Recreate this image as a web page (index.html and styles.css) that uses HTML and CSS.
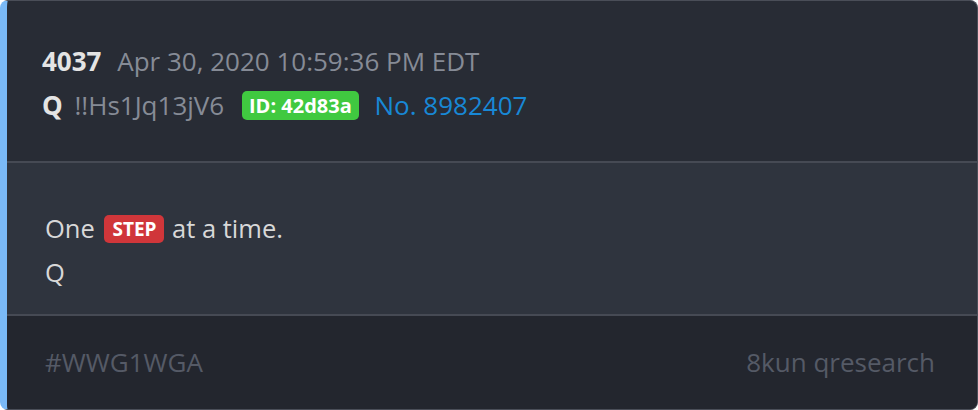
FILE: index.html
```html
<!DOCTYPE html>
<html>
<head>
    <meta charset="UTF-8">
    <title>Post 4037</title>
    <link rel="stylesheet" href="styles.css">
</head>
<body>
    <div class="post">
        <div class="post-header">
            <div class="line">
                <span class="num">4037</span>
                <span class="date">Apr 30, 2020 10:59:36 PM EDT</span>
            </div>
            <div class="line">
                <span class="name">Q</span>
                <span class="trip">!!Hs1Jq13jV6</span>
                <span class="badge id">ID: 42d83a</span>
                <span class="postno">No. 8982407</span>
            </div>
        </div>
        <div class="post-body">
            <div class="line">One <span class="badge step">STEP</span> at a time.</div>
            <div class="line">Q</div>
        </div>
        <div class="post-footer">
            <span>#WWG1WGA</span>
            <span>8kun qresearch</span>
        </div>
    </div>
</body>
</html>
```

FILE: styles.css
```css
body {
    margin: 0;
    background-color: #ffffff;
    font-family: "Open Sans", "Liberation Sans", sans-serif;
}

.post {
    width: 978px;
    height: 410px;
    box-sizing: border-box;
    border: 1px solid #4a4e58;
    border-left: 7px solid #7ab9f6;
    border-radius: 8px;
    overflow: hidden;
    background-color: #282c35;
}

.line {
    line-height: 44px;
    white-space: nowrap;
}

.post-header {
    height: 122px;
    padding: 38px 35px 0;
    border-bottom: 2px solid #464a54;
    font-size: 26px;
}

.num {
    font-weight: bold;
    color: #e4e4e4;
    margin-right: 9px;
}

.date {
    color: #868b96;
}

.name {
    font-weight: bold;
    color: #e4e4e4;
    margin-right: 5px;
}

.trip {
    color: #868b96;
    margin-right: 11px;
}

.badge {
    display: inline-block;
    font-weight: bold;
    color: #ffffff;
    border-radius: 5px;
    vertical-align: 2px;
}

.id {
    background-color: #40c940;
    font-size: 20px;
    line-height: 29px;
    padding: 0 7px;
    margin-right: 9px;
}

.postno {
    color: #1888d6;
}

.post-body {
    height: 108px;
    padding: 43px 38px 0;
    background-color: #2f343e;
    border-bottom: 2px solid #464a54;
    font-size: 25.5px;
    color: #d8d8d8;
}

.step {
    background-color: #d0363a;
    font-size: 19px;
    line-height: 28px;
    padding: 0 8px;
    margin: 0 1px 0 3px;
}

.post-footer {
    display: flex;
    justify-content: space-between;
    padding: 24px 42px 0 38px;
    height: 69px;
    background-color: #23262e;
    font-size: 26px;
    line-height: 44px;
    color: #555a66;
}
```
